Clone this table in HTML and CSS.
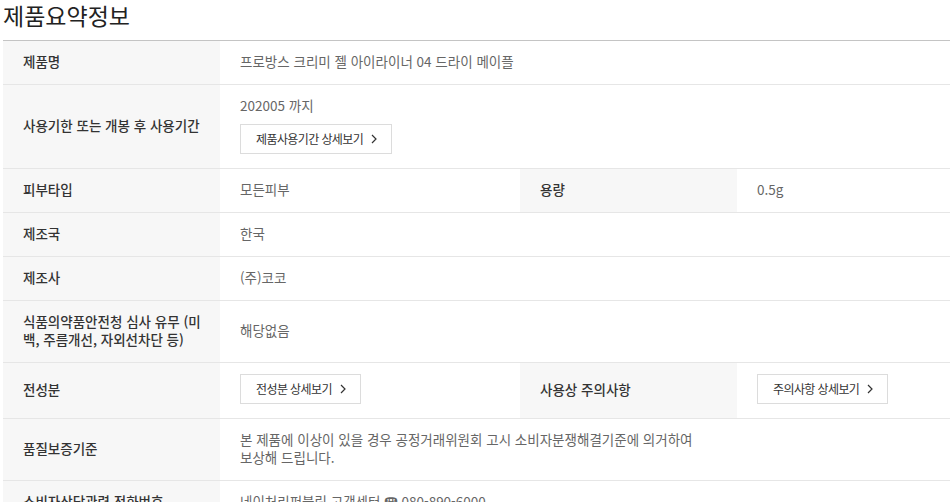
FILE: index.html
```html
<!DOCTYPE html>
<html lang="ko">
<head>
<meta charset="utf-8">
<link rel="stylesheet" href="styles.css">
</head>
<body>
<div class="wrap">
  <h2 class="title">제품요약정보</h2>
  <table class="spec">
    <colgroup>
      <col class="c-label"><col class="c-val"><col class="c-label"><col>
    </colgroup>
    <tbody>
      <tr>
        <th>제품명</th>
        <td colspan="3">프로방스 크리미 젤 아이라이너 04 드라이 메이플</td>
      </tr>
      <tr>
        <th>사용기한 또는 개봉 후 사용기간</th>
        <td colspan="3">
          <div>202005 까지</div>
          <a class="btn btn-gap">제품사용기간 상세보기<svg class="chev" viewBox="0 0 6 10" width="6" height="10"><path d="M1 1l4 4-4 4" fill="none" stroke="#333" stroke-width="1.2"/></svg></a>
        </td>
      </tr>
      <tr>
        <th>피부타입</th>
        <td>모든피부</td>
        <th>용량</th>
        <td>0.5g</td>
      </tr>
      <tr>
        <th>제조국</th>
        <td colspan="3">한국</td>
      </tr>
      <tr>
        <th>제조사</th>
        <td colspan="3">(주)코코</td>
      </tr>
      <tr>
        <th class="wrapall">식품의약품안전청 심사 유무 (미백, 주름개선, 자외선차단 등)</th>
        <td colspan="3">해당없음</td>
      </tr>
      <tr>
        <th>전성분</th>
        <td><a class="btn">전성분 상세보기<svg class="chev" viewBox="0 0 6 10" width="6" height="10"><path d="M1 1l4 4-4 4" fill="none" stroke="#333" stroke-width="1.2"/></svg></a></td>
        <th>사용상 주의사항</th>
        <td><a class="btn">주의사항 상세보기<svg class="chev" viewBox="0 0 6 10" width="6" height="10"><path d="M1 1l4 4-4 4" fill="none" stroke="#333" stroke-width="1.2"/></svg></a></td>
      </tr>
      <tr>
        <th>품질보증기준</th>
        <td colspan="3">본 제품에 이상이 있을 경우 공정거래위원회 고시 소비자분쟁해결기준에 의거하여<br>보상해 드립니다.</td>
      </tr>
      <tr>
        <th>소비자상담관련 전화번호</th>
        <td colspan="3">네이처리퍼블릭 고객센터 ☎ 080-890-6000</td>
      </tr>
    </tbody>
  </table>
</div>
</body>
</html>
```
FILE: styles.css
```css
html, body {
  margin: 0;
  padding: 0;
  background: #fff;
}
body {
  font-family: "Noto Sans CJK KR", "Noto Sans", sans-serif;
  color: #333;
}
.wrap {
  padding-left: 3px;
}
.title {
  margin: 0;
  font-size: 23px;
  font-weight: 400;
  line-height: 30px;
  color: #222;
  padding-bottom: 10px;
}
.spec {
  width: 947px;
  border-collapse: collapse;
  table-layout: fixed;
  border-top: 1px solid #c4c4c4;
}
.c-label { width: 217px; }
.c-val { width: 300px; }
.spec th, .spec td {
  font-size: 13.5px;
  line-height: 18px;
  padding: 11px 20px 14px;
  text-align: left;
  vertical-align: middle;
  border-bottom: 1px solid #e6e6e6;
}
.spec th {
  background: #f7f7f7;
  font-weight: 500;
  color: #333;
  padding-right: 8px;
}
.spec td {
  font-weight: 400;
  color: #666;
}
.wrapall {
  word-break: break-all;
}
.btn {
  display: inline-flex;
  align-items: center;
  gap: 8px;
  height: 30px;
  box-sizing: border-box;
  padding: 0 14px 0 15px;
  border: 1px solid #dcdcdc;
  background: #fff;
  font-size: 12px;
  color: #333;
  letter-spacing: -0.6px;
  vertical-align: middle;
}
.btn-gap {
  margin-top: 10px;
}
.chev {
  display: block;
}
```
